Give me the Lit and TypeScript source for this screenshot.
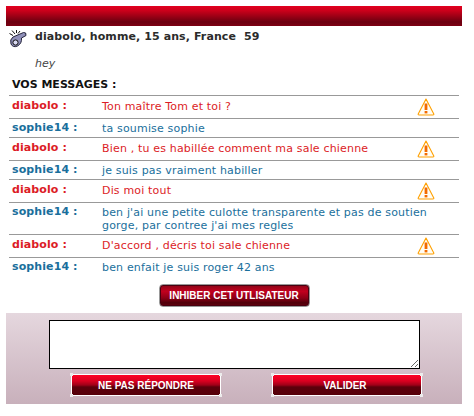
import { LitElement, html, css, svg } from 'lit';
import { customElement } from 'lit/decorators.js';

interface Message {
  from: 'diabolo' | 'sophie14';
  text: string;
}

const messages: Message[] = [
  { from: 'diabolo', text: 'Ton maître Tom et toi ?' },
  { from: 'sophie14', text: 'ta soumise sophie' },
  { from: 'diabolo', text: 'Bien , tu es habillée comment ma sale chienne' },
  { from: 'sophie14', text: 'je suis pas vraiment habiller' },
  { from: 'diabolo', text: 'Dis moi tout' },
  {
    from: 'sophie14',
    text: "ben j'ai une petite culotte transparente et pas de soutien gorge, par contree j'ai mes regles",
  },
  { from: 'diabolo', text: "D'accord , décris toi sale chienne" },
  { from: 'sophie14', text: 'ben enfait je suis roger 42 ans' },
];

const warnIcon = svg`<svg class="warn" width="18" height="18" viewBox="0 0 18 18">
  <path d="M9 1 L1.2 16 Q1 17 2 17 L16 17 Q17 17 16.8 16 Z" fill="#fffdf5" stroke="#ffa000" stroke-width="1.1" stroke-linejoin="round"/>
  <rect x="7.6" y="5.5" width="2.8" height="6.5" fill="#f26a00"/>
  <rect x="7.6" y="13" width="2.8" height="2.4" fill="#f26a00"/>
</svg>`;

const whistleIcon = svg`<svg class="whistle" width="18" height="18" viewBox="0 0 18 18">
  <path d="M3 0.5 L6 4 M7.5 0 L7.5 3 M0.5 3.5 L4 5.5 M11 1 L9 3.5" stroke="#111" stroke-width="1" fill="none"/>
  <path d="M4 7 L14.5 2.5 Q17.5 2 17 5.5 L12.5 8 Q13 13.5 8.5 16 Q4 18 2 14 Q0.5 9.5 4 7 Z" fill="#8f8fb8" stroke="#23233a" stroke-width="1"/>
  <circle cx="6.5" cy="12.5" r="2.6" fill="#d8d8f0" stroke="#111" stroke-width="1"/>
</svg>`;

@customElement('app-root')
export class AppRoot extends LitElement {
  render() {
    return html`
      <div class="frame">
        <div class="top-bar"></div>
        <div class="profile">
          ${whistleIcon}
          <span>diabolo, homme, 15 ans, France&nbsp; 59</span>
        </div>
        <div class="status">hey</div>
        <div class="section-title">VOS MESSAGES :</div>
        <div class="messages">
          ${messages.map(
            (m) => html`
              <div class="row ${m.from === 'diabolo' ? 'red' : 'blue'}">
                <div class="name">${m.from} :</div>
                <div class="text">${m.text}</div>
                ${m.from === 'diabolo' ? warnIcon : ''}
              </div>
            `
          )}
        </div>
        <div class="inhibit-wrap">
          <button class="inhibit">INHIBER CET UTLISATEUR</button>
        </div>
        <div class="reply">
          <textarea></textarea>
          <div class="actions">
            <button class="action">NE PAS RÉPONDRE<i></i></button>
            <button class="action validate">VALIDER<i></i></button>
          </div>
        </div>
      </div>
    `;
  }

  static styles = css`
    :host {
      display: block;
      height: 416px;
      background: #fff;
      font-family: 'DejaVu Sans', Verdana, sans-serif;
      font-size: 11px;
      color: #222;
    }
    .frame {
      width: 456px;
      margin-left: 6px;
      padding-top: 6px;
    }
    .top-bar {
      height: 20px;
      background: linear-gradient(#e2001f 0, #d0001b 20%, #6b0010 80%, #7d0012 100%);
    }
    .profile {
      display: flex;
      align-items: flex-start;
      gap: 8px;
      height: 18px;
      margin-top: 4px;
      padding-left: 3px;
      font-weight: bold;
      line-height: 14px;
      letter-spacing: 0.1px;
      color: #2b2b2b;
      white-space: pre;
    }
    .status {
      margin-top: 9px;
      padding-left: 29px;
      font-style: italic;
      line-height: 14px;
      color: #444;
    }
    .section-title {
      margin-top: 7px;
      padding-left: 6px;
      font-weight: bold;
      line-height: 14px;
      color: #111;
      height: 17px;
    }
    .messages {
      margin: 0 3px;
      width: 450px;
    }
    .row {
      display: grid;
      grid-template-columns: 90px 1fr;
      padding-left: 3px;
      border-top: 1px solid #999;
      line-height: 13px;
      box-sizing: border-box;
      position: relative;
    }
    .row.red {
      height: 23px;
      color: #dc1c26;
    }
    .row.blue {
      color: #1a6f9c;
    }
    .name {
      font-weight: bold;
      padding-top: 2px;
      letter-spacing: 0.1px;
    }
    .red .name {
      padding-top: 3px;
    }
    .text {
      padding: 3px 20px 2px 0;
      letter-spacing: 0.17px;
    }
    .red .text {
      padding-top: 4px;
    }
    .warn {
      display: block;
      position: absolute;
      left: 408px;
      top: 2px;
    }
    .whistle {
      display: block;
    }
    .inhibit-wrap {
      display: flex;
      justify-content: center;
      margin-top: 8px;
    }
    button {
      font-family: 'Liberation Sans', Arial, sans-serif;
      font-weight: bold;
      font-size: 10px;
      color: #fff;
      padding: 0;
      cursor: pointer;
    }
    .inhibit {
      width: 151px;
      height: 23px;
      border: 1px solid #999;
      border-radius: 4px;
      background: linear-gradient(#8a0618 0, #c2001e 30%, #8d0016 62%, #4e000a 85%, #6a000f 100%);
      box-shadow: inset 0 0 0 1px #4a0010;
    }
    .reply {
      margin-top: 6px;
      height: 91px;
      box-sizing: border-box;
      padding: 7px 42px 0 43px;
      background: linear-gradient(#e5d7de, #c8b0bb);
    }
    textarea {
      display: block;
      width: 371px;
      height: 49px;
      box-sizing: border-box;
      border: 1px solid #000;
      outline: none;
      margin: 0;
      padding: 2px;
      background: #fff;
    }
    .actions {
      display: flex;
      gap: 51px;
      margin-top: 5px;
      padding-left: 22px;
    }
    .action {
      position: relative;
      flex: none;
      width: 150px;
      height: 22px;
      border: 1px solid #fff;
      border-radius: 1px;
      background: linear-gradient(#ff0024 0, #d80020 30%, #a00018 50%, #5c000c 60%, #560009 100%);
    }
    .action.validate {
      padding-right: 4px;
    }
    .action i {
      position: absolute;
      inset: -2px;
      background:
        linear-gradient(#ececec, #ececec) 0 0 / 3px 3px no-repeat,
        linear-gradient(#ececec, #ececec) 100% 0 / 3px 3px no-repeat,
        linear-gradient(#ececec, #ececec) 0 100% / 3px 3px no-repeat,
        linear-gradient(#ececec, #ececec) 100% 100% / 3px 3px no-repeat;
    }
  `;
}
